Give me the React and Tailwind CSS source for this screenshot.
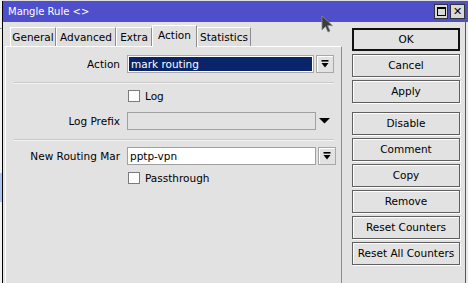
import React from "react";

// dropdown glyph: bar over a down triangle
function DropIcon() {
  return (
    <svg width="8" height="8" viewBox="0 0 8 8">
      <rect x="0.5" y="0" width="7" height="1.6" fill="#000" />
      <polygon points="0.5,3 7.5,3 4,7.5" fill="#000" />
    </svg>
  );
}

function DropButton() {
  return (
    <div className="w-[18px] h-[18px] ml-[2px] flex items-center justify-center border border-[#a8a8a8] bg-[#e2e2e2] shadow-[inset_1px_1px_0_#fff]">
      <DropIcon />
    </div>
  );
}

function Checkbox({ label }) {
  return (
    <div className="flex items-center h-[12px]">
      <div className="w-[114px]" />
      <div className="ml-[8px] w-[12px] h-[12px] bg-white border border-[#7c7c7c]" />
      <span className="ml-[5px] text-[10.5px] leading-none text-black">{label}</span>
    </div>
  );
}

function Label({ children }) {
  return (
    <div className="w-[114px] text-right text-[10.5px] leading-none text-black whitespace-nowrap">
      {children}
    </div>
  );
}

function Separator() {
  return <div className="ml-[8px] w-[320px] h-px bg-[#c9c9c9] shadow-[0_1px_0_#f4f4f4]" />;
}

function Button({ children, primary, className = "" }) {
  return (
    <button
      className={`h-[23px] w-[108px] flex items-center justify-center bg-[#e2e2e2] text-[10.5px] leading-none text-black whitespace-nowrap ${
        primary
          ? "border-2 border-[#111]"
          : "border border-[#5f5f5f] shadow-[inset_1px_1px_0_#fff,1px_1px_0_#fff]"
      } ${className}`}
    >
      {children}
    </button>
  );
}

const tabs = [
  { name: "General", w: "w-[46px]" },
  { name: "Advanced", w: "w-[60px]" },
  { name: "Extra", w: "w-[36px]" },
  { name: "Action", w: "w-[45px]", active: true },
  { name: "Statistics", w: "w-[54px]" },
];

export default function App() {
  return (
    <div className="relative w-[468px] h-[283px] overflow-hidden bg-[#dedede] flex font-['DejaVu_Sans',sans-serif]">
      {/* window behind, peeking on the left */}
      <div className="w-[2px] h-full flex flex-col bg-[#f2f2f2]">
        <div className="h-[28px]" />
        <div className="h-px bg-[#9a9a9a]" />
        <div className="h-[144px]" />
        <div className="h-[29px] bg-[#a9c7ee]" />
        <div className="flex-1" />
      </div>

      <div className="flex-1 flex flex-col pt-px">
        {/* title bar */}
        <div className="h-[21px] flex items-center bg-[#4f4fcb] border-l border-black">
          <span className="ml-[5px] text-[10px] leading-none text-white">Mangle Rule &lt;&gt;</span>
          <div className="ml-auto mr-[3px] flex gap-[2px]">
            <div className="w-[14px] h-[15px] flex items-center justify-center bg-[#d8d8d8] border border-[#333]">
              <div className="w-[9px] h-[9px] border border-black border-t-2" />
            </div>
            <div className="w-[15px] h-[15px] flex items-center justify-center bg-[#d8d8d8] border border-[#333] text-[11px] font-bold leading-none text-black">
              ✕
            </div>
          </div>
        </div>

        {/* body */}
        <div className="flex-1 flex bg-[#e2e2e2] border-l border-black">
          {/* tabs + panel */}
          <div className="w-[339px] flex flex-col">
            <div className="h-[24px] pl-[7px] flex items-end">
              {tabs.map((t) =>
                t.active ? (
                  <div
                    key={t.name}
                    className={`${t.w} h-[22px] -mb-px relative z-10 pb-[3px] flex items-center justify-center bg-[#e2e2e2] border-l border-t border-white border-r border-r-[#8c8c8c] text-[10.5px] leading-none text-black`}
                  >
                    {t.name}
                  </div>
                ) : (
                  <div
                    key={t.name}
                    className={`${t.w} h-[19px] flex items-center justify-center bg-[#dedede] border-l border-t border-white border-r border-r-[#8c8c8c] text-[10.5px] leading-none text-black`}
                  >
                    {t.name}
                  </div>
                )
              )}
            </div>

            <div className="ml-[2px] w-[337px] flex-1 flex flex-col pt-[8px] border-t border-l border-white border-r border-r-[#8c8c8c]">
              {/* Action */}
              <div className="flex items-center h-[18px]">
                <Label>Action</Label>
                <div className="ml-[7px] w-[187px] h-[18px] border border-[#a8a8a8] bg-white p-px">
                  <div className="h-full bg-[#0a246a] flex items-center pl-[2px] text-[10.5px] leading-none text-white">
                    mark routing
                  </div>
                </div>
                <DropButton />
              </div>

              <div className="mt-[9px]">
                <Separator />
              </div>

              <div className="mt-[7px]">
                <Checkbox label="Log" />
              </div>

              {/* Log Prefix */}
              <div className="mt-[10px] flex items-center h-[18px]">
                <Label>Log Prefix</Label>
                <div className="ml-[7px] w-[189px] h-[18px] border border-[#a0a0a0] bg-[#e2e2e2]" />
                <svg className="ml-[3px]" width="11" height="6" viewBox="0 0 11 6">
                  <polygon points="0,0 11,0 5.5,5.5" fill="#000" />
                </svg>
              </div>

              <div className="mt-[9px]">
                <Separator />
              </div>

              {/* New Routing Mark */}
              <div className="mt-[7px] flex items-center h-[18px]">
                <Label>New Routing Mar</Label>
                <div className="ml-[7px] w-[189px] h-[18px] border border-[#a0a0a0] bg-white flex items-center pl-[2px] text-[10.5px] leading-none text-black">
                  pptp-vpn
                </div>
                <DropButton />
              </div>

              <div className="mt-[7px]">
                <Checkbox label="Passthrough" />
              </div>
            </div>
          </div>

          {/* buttons */}
          <div className="w-[123px] pl-[10px] pt-[6px] flex flex-col gap-[3px]">
            <Button primary>OK</Button>
            <Button>Cancel</Button>
            <Button>Apply</Button>
            <Button className="mt-[6px]">Disable</Button>
            <Button>Comment</Button>
            <Button>Copy</Button>
            <Button>Remove</Button>
            <Button>Reset Counters</Button>
            <Button>Reset All Counters</Button>
          </div>

          <div className="w-px bg-[#5a5a5a]" />
          <div className="w-[2px] bg-[#e8e8e8]" />
        </div>
      </div>

      {/* mouse pointer over the title bar */}
      <svg className="absolute left-[321px] top-[15px]" width="13" height="19" viewBox="0 0 13 19">
        <path
          d="M1 1 L1 15 L4.5 11.5 L7 17 L9 16 L6.6 10.6 L11.5 10.6 Z"
          fill="#3c3c3c"
          stroke="#8a8a8a"
          strokeWidth="0.8"
          strokeLinejoin="round"
        />
      </svg>
    </div>
  );
}
